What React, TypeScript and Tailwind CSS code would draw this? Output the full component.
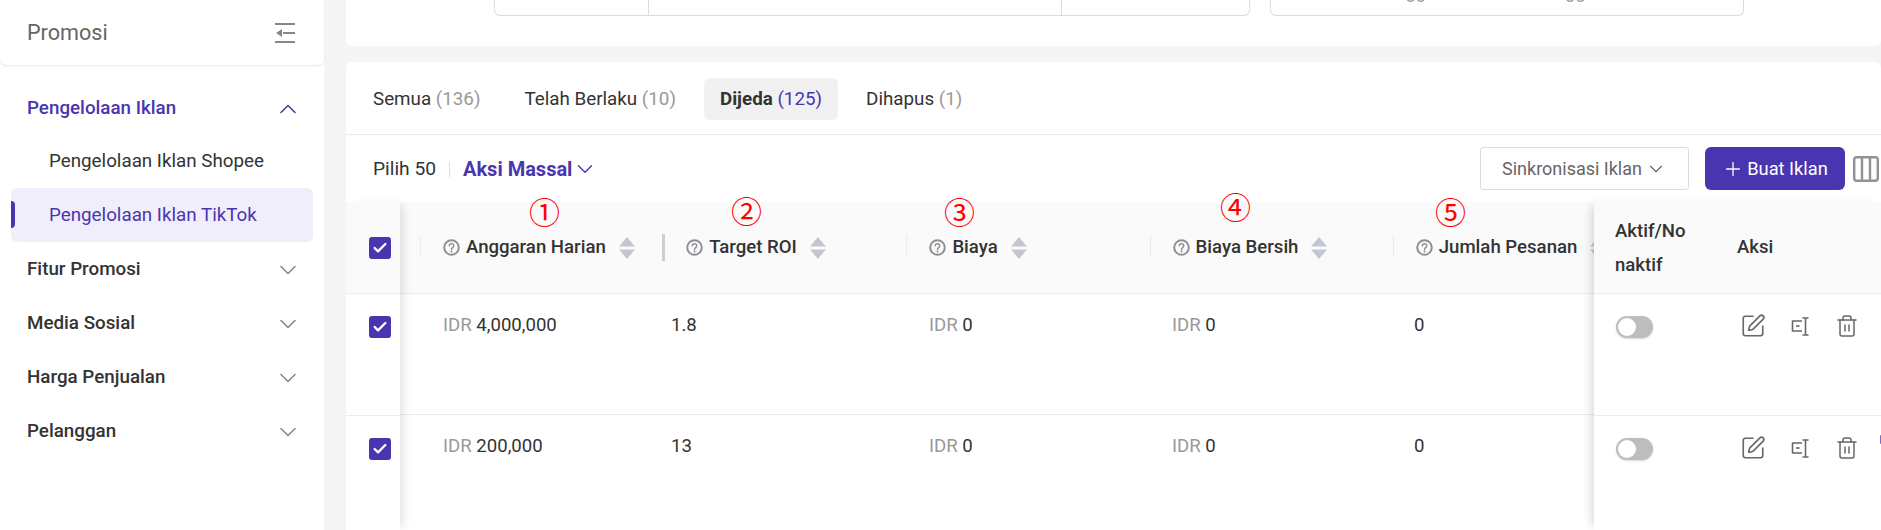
import { ChevronDown, ChevronUp, Plus, SquarePen, Trash2, Check } from "lucide-react";

const navBottom = ["Fitur Promosi", "Media Sosial", "Harga Penjualan", "Pelanggan"];

const columns = ["Anggaran Harian", "Target ROI", "Biaya", "Biaya Bersih", "Jumlah Pesanan"];

const marks = [
  { mark: "①", pos: "left-[183px] top-[-11px]" },
  { mark: "②", pos: "left-[385px] top-[-12px]" },
  { mark: "③", pos: "left-[598px] top-[-11px]" },
  { mark: "④", pos: "left-[874px] top-[-16px]" },
  { mark: "⑤", pos: "left-[1089px] top-[-11px]" },
];

const rows = [
  { budget: "4,000,000", roi: "1.8" },
  { budget: "200,000", roi: "13" },
];

function Tick() {
  return (
    <span className="flex h-[22px] w-[22px] items-center justify-center rounded-[3px] bg-[#4a35b0] text-white">
      <Check size={16} strokeWidth={3.5} />
    </span>
  );
}

function Help() {
  return (
    <svg width="17" height="17" viewBox="0 0 17 17" fill="none" className="shrink-0">
      <circle cx="8.5" cy="8.5" r="7.3" stroke="#8f8f95" strokeWidth="2" />
      <path d="M6.3 6.8a2.2 2.2 0 1 1 3.4 1.9c-.8.5-1.2.9-1.2 1.7" stroke="#8f8f95" strokeWidth="1.5" strokeLinecap="round" />
      <circle cx="8.5" cy="12.5" r="1" fill="#8f8f95" />
    </svg>
  );
}

function Sort() {
  return (
    <svg width="16" height="22" viewBox="0 0 16 22" className="shrink-0">
      <path d="M8 0l8 9.5H0z" fill="#c3c6d0" />
      <path d="M8 22l8-9.5H0z" fill="#c3c6d0" />
    </svg>
  );
}

function RenameIcon() {
  return (
    <svg width="19" height="19" viewBox="0 0 19 19" fill="none" stroke="#66666c" strokeWidth="1.6">
      <path d="M11 4H1.5v10H11" strokeLinejoin="round" />
      <path d="M5 9h3.5" />
      <path d="M11.5 1h6M14.5 1v17M11.5 18h6" />
    </svg>
  );
}

function Toggle() {
  return (
    <span className="flex h-[22px] w-[37px] shrink-0 items-center rounded-full bg-[#bdbdbd] pl-[2px] shadow-[0_1px_2px_rgba(0,0,0,0.15)]">
      <span className="h-[18px] w-[18px] rounded-full bg-white" />
    </span>
  );
}

export default function App() {
  return (
    <div className="flex h-[530px] w-[1881px] overflow-hidden bg-[#f5f5f5] font-['Roboto',sans-serif] text-[18.6px] text-[#333]">
      <aside className="h-full w-[324px] shrink-0 bg-white">
        <div className="flex h-[65px] items-center justify-between rounded-b-md pl-[27px] pr-[29px] pt-[1px] shadow-[0_1px_2px_rgba(0,0,0,0.1)]">
          <span className="text-[21.6px] text-[#666]">Promosi</span>
          <svg width="20" height="20" viewBox="0 0 20 20" fill="#85858c">
            <rect y="0" width="20" height="2" />
            <rect x="8" y="9" width="12" height="2" />
            <path d="M1 10l6-4v8z" />
            <rect y="18" width="20" height="2" />
          </svg>
        </div>
        <nav className="pt-[16px] text-[18.8px]">
          <div className="flex h-[54px] items-center justify-between pl-[27px] pr-[22px] pt-[1px] font-medium text-[#4a35b0]">
            Pengelolaan Iklan
            <ChevronUp size={28} strokeWidth={1.3} />
          </div>
          <div className="flex h-[53px] items-center pl-[49px]">Pengelolaan Iklan Shopee</div>
          <div className="relative mx-[11px] flex h-[54px] items-center rounded-md bg-[#f1eefc] pl-[38px] pt-[1px] text-[#4a35b0]">
            <span className="absolute left-0 top-[13px] h-[27px] w-[4px] rounded-r-sm bg-[#4a35b0]" />
            Pengelolaan Iklan TikTok
          </div>
          {navBottom.map((item) => (
            <div key={item} className="flex h-[54px] items-center justify-between pl-[27px] pr-[22px] pt-[1px] font-medium">
              {item}
              <ChevronDown size={28} strokeWidth={1.3} className="text-[#85858c]" />
            </div>
          ))}
        </nav>
      </aside>

      <main className="ml-[22px] flex min-w-0 flex-1 flex-col gap-[16px]">
        <section className="flex h-[46px] shrink-0 items-start gap-[20px] rounded-b-md bg-white pl-[148px]">
          <div className="flex h-[16px] w-[756px] rounded-b-md border-x border-b border-[#dcdcdc]">
            <span className="w-[154px] border-r border-[#dcdcdc]" />
            <span className="w-[413px] border-r border-[#dcdcdc]" />
          </div>
          <div className="h-[16px] w-[474px] overflow-hidden rounded-b-md border-x border-b border-[#dcdcdc] text-[#a0a0a0]">
            <div className="mt-[-20px] flex leading-[24px]">
              <span className="ml-[112px]">Anggaran</span>
              <span className="ml-[80px]">Anggaran</span>
            </div>
          </div>
        </section>

        <section className="flex min-h-0 flex-1 flex-col rounded-t-md bg-white">
          <div className="flex h-[73px] shrink-0 items-center gap-[12px] border-b border-[#ececec] pl-[11px] pt-[2px] text-[18.8px]">
            <span className="px-[16px]">Semua <span className="text-[#999]">(136)</span></span>
            <span className="px-[16px]">Telah Berlaku <span className="text-[#999]">(10)</span></span>
            <span className="flex h-[42px] items-center rounded-md bg-[#f1f1f1] px-[16px]">
              <b className="font-bold">Dijeda</b>&nbsp;<span className="text-[#4a35b0]">(125)</span>
            </span>
            <span className="px-[16px]">Dihapus <span className="text-[#999]">(1)</span></span>
          </div>

          <div className="flex h-[67px] shrink-0 items-start justify-between pl-[27px] pr-[2px] pt-[12px]">
            <div className="flex h-[43px] items-center pt-[1px] text-[19.2px]">
              <span>Pilih 50</span>
              <span className="mx-[13px] h-[15px] w-px bg-[#ddd]" />
              <span className="text-[20px] font-bold text-[#4a35b0]">Aksi Massal</span>
              <ChevronDown size={26} strokeWidth={1.3} className="text-[#4a35b0]" />
            </div>
            <div className="flex items-center">
              <button className="flex h-[43px] w-[209px] items-center justify-center gap-[3px] rounded-[3px] border border-[#ddd] text-[18px] text-[#666]">
                Sinkronisasi Iklan
                <ChevronDown size={22} strokeWidth={1.2} />
              </button>
              <button className="ml-[16px] flex h-[43px] w-[140px] items-center justify-center gap-[3px] rounded-md bg-[#4a35b0] text-[18.3px] text-white">
                <Plus size={22} strokeWidth={1.4} />
                Buat Iklan
              </button>
              <svg width="26" height="26" viewBox="0 0 26 26" fill="none" stroke="#919197" strokeWidth="2.4" className="ml-[8px]">
                <rect x="1.2" y="1.2" width="23.6" height="23.6" rx="2.5" />
                <path d="M9 1v24M17 1v24" />
              </svg>
            </div>
          </div>

          <div className="relative flex min-h-0 flex-1">
            <div className="relative z-10 w-[54px] shrink-0 bg-white shadow-[6px_0_10px_-4px_rgba(0,0,0,0.14)]">
              <div className="flex h-[91px] items-center bg-[#fafafa] pl-[23px]">
                <Tick />
              </div>
              {rows.map((row) => (
                <div key={row.budget} className="h-[122px] border-t border-[#ececec] pl-[23px] pt-[22px]">
                  <Tick />
                </div>
              ))}
            </div>

            <div className="min-w-0 flex-1 overflow-hidden">
              <div className="flex h-[91px] bg-[#fafafa] pl-[20px]">
                {columns.map((title, i) => (
                  <div key={title} className="relative flex h-full w-[243.2px] shrink-0 items-center pl-[23px]">
                    {i === 1 ? (
                      <span className="absolute left-[-1px] top-[32px] h-[27px] w-[3px] bg-[#cfcfcf]" />
                    ) : (
                      <span className="absolute left-0 top-[33px] h-[22px] w-px bg-[#ececec]" />
                    )}
                    <span className="flex items-center gap-[6px] font-medium">
                      <Help />
                      <span className="whitespace-nowrap pt-[1px]">{title}</span>
                    </span>
                    <span className="ml-[13px]"><Sort /></span>
                  </div>
                ))}
              </div>
              {rows.map((row) => (
                <div key={row.budget} className="flex h-[121px] border-t border-[#ececec] pl-[43px] pt-[18px]">
                  <span className="w-[228px] shrink-0"><span className="text-[#999]">IDR</span> {row.budget}</span>
                  <span className="w-[258px] shrink-0">{row.roi}</span>
                  <span className="w-[243px] shrink-0"><span className="text-[#999]">IDR</span> 0</span>
                  <span className="w-[242px] shrink-0"><span className="text-[#999]">IDR</span> 0</span>
                  <span>0</span>
                </div>
              ))}
            </div>

            <div className="relative z-10 w-[287px] shrink-0 bg-white shadow-[-6px_0_10px_-4px_rgba(0,0,0,0.16)]">
              <div className="flex h-[91px] items-center bg-[#fafafa] pl-[21px] font-medium">
                <span className="w-[74px] break-all leading-[34px]">Aktif/Nonaktif</span>
                <span className="ml-[48px] pt-[1px]">Aksi</span>
              </div>
              {rows.map((row, i) => (
                <div key={row.budget} className="relative h-[122px] border-t border-[#ececec] pl-[22px] pt-[22px]">
                  <div className="flex h-[22px] items-center">
                    <Toggle />
                    <div className="ml-[87px] mt-[-2px] flex items-center gap-[25px] text-[#66666c]">
                      <SquarePen size={26} strokeWidth={1.5} />
                      <RenameIcon />
                      <Trash2 size={24} strokeWidth={1.5} />
                    </div>
                  </div>
                  {i === 1 && <span className="absolute right-0 top-[19px] h-[9px] w-px rounded-l-full bg-[#7b6bd0]" />}
                </div>
              ))}
            </div>

            {marks.map((item) => (
              <span
                key={item.mark}
                className={`absolute z-20 ${item.pos} font-['Noto_Sans_CJK_SC',sans-serif] text-[31px] leading-[40px] text-[#f00]`}
              >
                {item.mark}
              </span>
            ))}
          </div>
        </section>
      </main>
    </div>
  );
}
